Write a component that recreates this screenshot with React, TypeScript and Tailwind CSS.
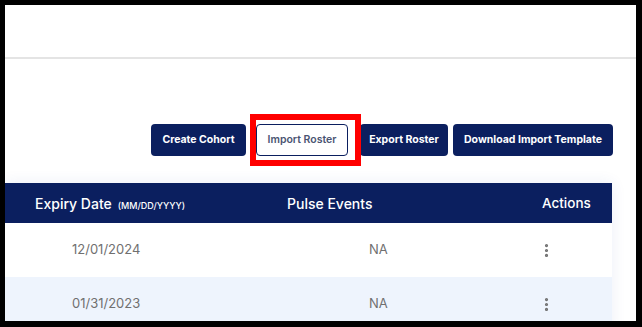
import { EllipsisVertical } from "lucide-react";

const rows = [
  { expiry: "12/01/2024", pulse: "NA", tint: false },
  { expiry: "01/31/2023", pulse: "NA", tint: true },
];

const App = () => {
  return (
    <div
      className="h-screen w-full bg-black pl-[5px] pr-[6px] pt-[5px] pb-[6px] flex"
      style={{ fontFamily: "Inter, 'Noto Sans', sans-serif" }}
    >
      <div className="flex-1 bg-white flex flex-col overflow-hidden">
        {/* top bar */}
        <div className="h-[54px] shrink-0 border-b-2 border-[#e4e4e4]" />

        {/* actions */}
        <div className="flex justify-end pt-[65px] pr-[23px] text-[10.5px] font-bold">
          <button className="w-[95px] h-[32px] rounded-[4px] bg-[#0b1f5f] text-white">
            Create Cohort
          </button>
          <div className="relative ml-[10px]">
            <button className="w-[92px] h-[32px] rounded-[4px] bg-white border border-[#0b1f5f] text-[#4a5472] font-semibold">
              Import Roster
            </button>
            <div className="absolute left-[-6px] top-[-10px] w-[111px] h-[52px] border-[6px] border-[#ff0000] pointer-events-none" />
          </div>
          <button className="ml-[12px] w-[88px] h-[32px] rounded-[4px] bg-[#0b1f5f] text-white">
            Export Roster
          </button>
          <button className="ml-[5px] w-[160px] h-[32px] rounded-[4px] bg-[#0b1f5f] text-white">
            Download Import Template
          </button>
        </div>

        {/* table */}
        <div className="mt-[27px] mr-[24px] shadow-[0_0_14px_rgba(40,80,170,0.09)]">
          <div className="grid grid-cols-[250px_225px_1fr] h-[40px] items-center bg-[#0b1f5f] text-white text-[14px] font-medium">
            <div className="pl-[30px] flex items-baseline gap-[6px]">
              Expiry Date <span className="text-[9px]">(MM/DD/YYYY)</span>
            </div>
            <div className="pl-[32px]">Pulse Events</div>
            <div className="pl-[62px] text-[13.5px]">Actions</div>
          </div>
          {rows.map((r, i) => (
            <div
              key={i}
              className={`grid grid-cols-[250px_225px_1fr] h-[54px] items-center text-[13px] text-[#707070] ${
                r.tint ? "bg-[#eef4fd]" : "bg-white"
              }`}
            >
              <div className="pl-[67px]">{r.expiry}</div>
              <div className="pl-[114px]">{r.pulse}</div>
              <div className="pl-[58px] flex">
                <EllipsisVertical size={17} strokeWidth={2.5} className="text-[#707070]" />
              </div>
            </div>
          ))}
        </div>
      </div>
    </div>
  );
};

export default App;
